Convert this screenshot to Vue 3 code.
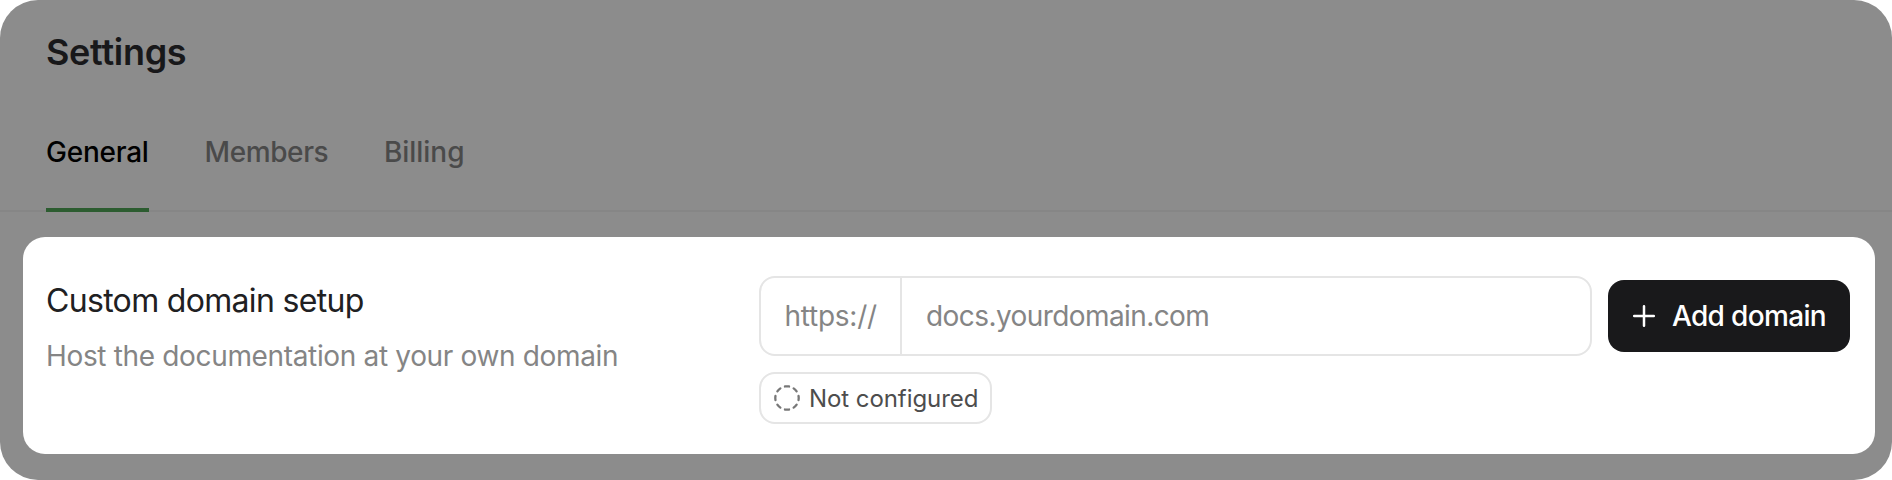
<script setup>
const tabs = [
  { id: 'general', label: 'General', active: true },
  { id: 'members', label: 'Members', active: false },
  { id: 'billing', label: 'Billing', active: false },
]
</script>

<template>
  <main class="page">
    <h1 class="title">Settings</h1>
    <nav class="tabs">
      <a v-for="tab in tabs" :key="tab.id" class="tab" :class="[tab.id, { active: tab.active }]">{{ tab.label }}</a>
    </nav>
    <section class="card">
      <div class="info">
        <h2 class="heading">Custom domain setup</h2>
        <p class="description">Host the documentation at your own domain</p>
      </div>
      <div class="setup">
        <div class="row">
          <div class="field">
            <span class="prefix"><span class="prefix-text">https://</span></span>
            <span class="placeholder">docs.yourdomain.com</span>
          </div>
          <button class="add" type="button">
            <svg class="plus" viewBox="0 0 24 24" width="24" height="24">
              <path d="M12 2.2v19.6M2.2 12h19.6" />
            </svg>
            <span class="add-text">Add domain</span>
          </button>
        </div>
        <div class="badge">
          <svg class="dashed" viewBox="0 0 28 28" width="28" height="28">
            <circle cx="14" cy="14" r="11.7" pathLength="80" />
          </svg>
          <span class="badge-text">Not configured</span>
        </div>
      </div>
    </section>
  </main>
</template>

<style>
body {
  margin: 0;
  background: #fff;
}
</style>

<style scoped>
.page {
  box-sizing: border-box;
  width: 1892px;
  height: 480px;
  overflow: hidden;
  border-radius: 38px;
  background: #8c8c8c;
  font-family: Inter, "Liberation Sans", sans-serif;
  white-space: nowrap;
}
.title {
  margin: 0;
  padding: 30px 0 0 46px;
  height: 44px;
  line-height: 44px;
  font-size: 36px;
  font-weight: 600;
  letter-spacing: -0.3px;
  color: #18181a;
}
.tabs {
  display: flex;
  box-sizing: border-box;
  height: 108px;
  margin-top: 30px;
  padding-left: 46px;
  border-bottom: 2px solid #868686;
}
.tab {
  box-sizing: border-box;
  height: 108px;
  padding-top: 31px;
  line-height: 34px;
  font-size: 28px;
  font-weight: 500;
  letter-spacing: -0.4px;
  color: #4a4a4a;
}
.tab.general {
  width: 103px;
  margin-right: 55.5px;
  letter-spacing: -0.25px;
}
.tab.members {
  width: 123px;
  margin-right: 56.5px;
}
.tab.billing {
  letter-spacing: -0.05px;
}
.tab.active {
  color: #000;
  border-bottom: 4px solid #2c5c30;
}
.card {
  display: flex;
  box-sizing: border-box;
  width: 1852px;
  height: 216.5px;
  margin: 25px 0 0 23px;
  padding: 39px 25px 0 23px;
  border-radius: 22px;
  background: #fff;
}
.info {
  width: 713px;
}
.heading {
  margin: 5px 0 0;
  line-height: 40px;
  font-size: 32px;
  font-weight: 400;
  letter-spacing: -0.68px;
  color: #202022;
}
.description {
  margin: 17px 0 0;
  line-height: 36px;
  font-size: 28px;
  letter-spacing: -0.34px;
  color: #858585;
}
.setup {
  width: 1091px;
}
.row {
  display: flex;
  align-items: center;
  gap: 16px;
}
.field {
  display: flex;
  box-sizing: border-box;
  width: 833px;
  height: 80px;
  border: 2px solid #e5e5e5;
  border-radius: 16px;
  line-height: 76px;
  font-size: 28px;
  color: #858585;
}
.prefix {
  box-sizing: border-box;
  width: 141px;
  padding-left: 23.5px;
  border-right: 2px solid #e5e5e5;
  letter-spacing: -0.25px;
}
.placeholder {
  padding-left: 24px;
  letter-spacing: -0.58px;
}
.add {
  display: flex;
  align-items: center;
  box-sizing: border-box;
  width: 242px;
  height: 72px;
  padding: 0 0 0 24px;
  border: 0;
  border-radius: 16px;
  background: #19191b;
  color: #fff;
  font-family: inherit;
  font-size: 28px;
  font-weight: 500;
}
.plus {
  margin-right: 16px;
  fill: none;
  stroke: #fff;
  stroke-width: 2.5;
  stroke-linecap: round;
}
.add-text {
  letter-spacing: -0.66px;
}
.badge {
  display: flex;
  align-items: center;
  box-sizing: border-box;
  width: 233px;
  height: 52px;
  margin-top: 16px;
  padding-left: 12px;
  border: 2px solid #e5e5e5;
  border-radius: 16px;
  font-size: 24px;
  color: #4d4d4d;
}
.dashed {
  margin-right: 8px;
  fill: none;
  stroke: #777;
  stroke-width: 2.3;
  stroke-linecap: round;
  stroke-dasharray: 4.6 5.4;
  stroke-dashoffset: 2.3;
}
.badge-text {
  letter-spacing: -0.07px;
}
</style>
